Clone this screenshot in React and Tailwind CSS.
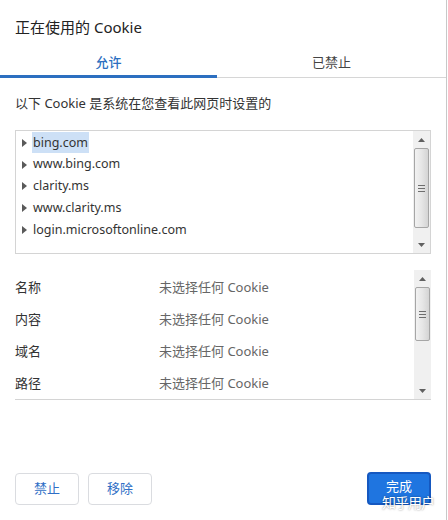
import React from "react";

const font = { fontFamily: '"Noto Sans", "Noto Sans CJK SC", sans-serif' };

function Tri() {
  return (
    <svg width="5" height="8" viewBox="0 0 5 8" className="shrink-0">
      <path d="M0 0 L5 4 L0 8 Z" fill="#5a5a5a" />
    </svg>
  );
}

function ScrollBar({ thumbTop, thumbHeight }) {
  return (
    <div className="w-[17px] h-full bg-[#f0f0f0] flex flex-col items-center relative shrink-0">
      <div className="h-[17px] w-full flex items-center justify-center">
        <svg width="7" height="4" viewBox="0 0 7 4"><path d="M0 4 L3.5 0 L7 4 Z" fill="#606060" /></svg>
      </div>
      <div
        className="absolute left-[1px] w-[15px] rounded-[2px] border border-[#a6a6a6] bg-gradient-to-r from-[#f2f2f2] via-[#e6e6e6] to-[#d4d4d4] flex items-center justify-center"
        style={{ top: thumbTop, height: thumbHeight }}
      >
        <div className="flex flex-col gap-[2px]">
          <div className="w-[7px] h-[1px] bg-[#6e6e6e]" />
          <div className="w-[7px] h-[1px] bg-[#6e6e6e]" />
          <div className="w-[7px] h-[1px] bg-[#6e6e6e]" />
        </div>
      </div>
      <div className="flex-1" />
      <div className="h-[17px] w-full flex items-center justify-center">
        <svg width="7" height="4" viewBox="0 0 7 4"><path d="M0 0 L3.5 4 L7 0 Z" fill="#606060" /></svg>
      </div>
    </div>
  );
}

export default function App() {
  const sites = ["bing.com", "www.bing.com", "clarity.ms", "www.clarity.ms", "login.microsoftonline.com"];
  const rows = ["名称", "内容", "域名", "路径"];
  return (
    <div style={font} className="w-[448px] h-[520px] bg-white relative overflow-hidden text-[#333]">
      <div className="w-[447px] h-full border-r border-[#c8c8c8] flex flex-col">
        <div className="h-[54px] flex items-center pl-[15px] text-[15px] text-[#222]">正在使用的 Cookie</div>
        <div className="flex h-[24px]">
          <div className="w-[217px] border-b-[3px] border-[#2c6fc0] flex justify-center">
            <span className="text-[13px] leading-[16px] text-[#2c6fc0] font-medium">允许</span>
          </div>
          <div className="flex-1 border-b border-[#d6d6d6] flex justify-center">
            <span className="text-[13px] leading-[16px] text-[#444]">已禁止</span>
          </div>
        </div>
        <div className="mt-[16px] pl-[15px] text-[13px] leading-[18px]">以下 Cookie 是系统在您查看此网页时设置的</div>
        <div className="mt-[18px] mx-[15px] h-[124px] border border-[#d4d4d4] flex">
          <div className="flex-1 pt-[1px]">
            {sites.map((s, i) => (
              <div key={s} className="h-[21.8px] flex items-center pl-[6px] gap-[5px] text-[12.5px]">
                <Tri />
                <span className={i === 0 ? "bg-[#cde0f6] px-[1px] leading-[21px]" : "px-[1px]"}>{s}</span>
              </div>
            ))}
          </div>
          <ScrollBar thumbTop={17} thumbHeight={80} />
        </div>
        <div className="mt-[16px] mx-[15px] h-[130px] border-b border-[#d4d4d4] flex">
          <div className="flex-1 pt-[2px]">
            {rows.map((r) => (
              <div key={r} className="h-[31.8px] flex items-center text-[13px]">
                <span className="w-[144px]">{r}</span>
                <span className="text-[#666]">未选择任何 Cookie</span>
              </div>
            ))}
          </div>
          <ScrollBar thumbTop={17} thumbHeight={54} />
        </div>
        <div className="flex-1" />
        <div className="flex items-center px-[15px] pb-[15px]">
          <button className="w-[64px] h-[32px] rounded-[4px] border border-[#dadce0] text-[13px] text-[#2f6fc6] bg-white">禁止</button>
          <button className="ml-[9px] w-[64px] h-[32px] rounded-[4px] border border-[#dadce0] text-[13px] text-[#2f6fc6] bg-white">移除</button>
          <div className="flex-1" />
          <button className="w-[64px] h-[33px] pb-[3px] rounded-[4px] border-2 border-[#1558c0] text-[13px] text-white bg-[#1f75e0]">完成</button>
        </div>
      </div>
      <div className="absolute left-[382px] top-[495px] text-[14px] leading-[16px] text-white [text-shadow:0_0_2px_rgba(0,0,0,0.5)] tracking-[-1px]">知乎用户</div>
    </div>
  );
}
